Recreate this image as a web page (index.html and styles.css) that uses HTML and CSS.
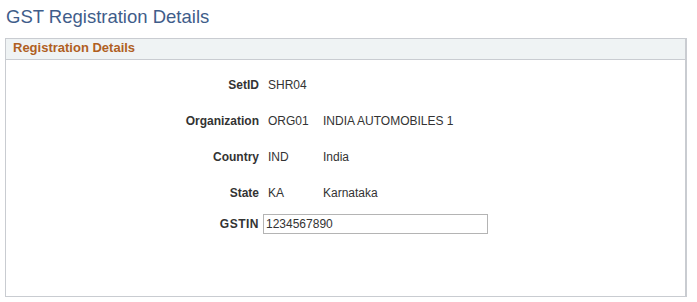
FILE: index.html
```html
<!DOCTYPE html>
<html>
<head>
<meta charset="utf-8">
<link rel="stylesheet" href="styles.css">
</head>
<body>
<h1 class="page-title">GST Registration Details</h1>
<div class="panel">
  <div class="panel-header">Registration Details</div>
  <div class="panel-body">
    <div class="form-grid">
      <div class="lbl">SetID</div><div class="val">SHR04</div><div class="val"></div>
      <div class="lbl">Organization</div><div class="val">ORG01</div><div class="val">INDIA AUTOMOBILES 1</div>
      <div class="lbl">Country</div><div class="val">IND</div><div class="val">India</div>
      <div class="lbl">State</div><div class="val">KA</div><div class="val">Karnataka</div>
      <div class="lbl lbl-input">GSTIN</div><div class="input-cell"><input class="text-input" type="text" value="1234567890"></div>
    </div>
  </div>
</div>
</body>
</html>
```
FILE: styles.css
```css
html, body {
  margin: 0;
  padding: 0;
  background: #ffffff;
  font-family: "Liberation Sans", Arial, sans-serif;
}
.page-title {
  margin: 0;
  padding: 5px 0 0 6px;
  height: 38px;
  box-sizing: border-box;
  font-size: 18.5px;
  font-weight: normal;
  line-height: 24px;
  color: #3f5d8a;
}
.panel {
  margin-left: 5px;
  width: 682px;
  height: 259px;
  box-sizing: border-box;
  border: 1px solid #c9ccd1;
  border-right-width: 2px;
  display: flex;
  flex-direction: column;
}
.panel-header {
  height: 20px;
  background: #eff3f4;
  border-bottom: 1px solid #c9ccd1;
  color: #b0601f;
  font-weight: bold;
  font-size: 13px;
  line-height: 18px;
  padding-left: 7px;
}
.panel-body {
  padding-top: 7px;
}
.form-grid {
  display: grid;
  grid-template-columns: 261px 55px 1fr;
  grid-auto-rows: 36px;
  align-items: center;
  font-size: 12px;
  color: #333333;
}
.lbl {
  text-align: right;
  font-weight: bold;
  padding-right: 8px;
}
.val {
  padding-left: 1px;
}
.input-cell {
  grid-column: 2 / span 2;
  margin-left: -4px;
  align-self: start;
  padding-top: 3px;
}
.lbl-input {
  align-self: start;
  padding-top: 6px;
  letter-spacing: 0.5px;
}
.text-input {
  display: block;
  width: 225px;
  height: 20px;
  box-sizing: border-box;
  margin: 0;
  padding: 0 2px;
  border: 1px solid #b4b4b4;
  font-family: "Liberation Sans", Arial, sans-serif;
  font-size: 12px;
  color: #333333;
  background: #ffffff;
  outline: none;
}
```
